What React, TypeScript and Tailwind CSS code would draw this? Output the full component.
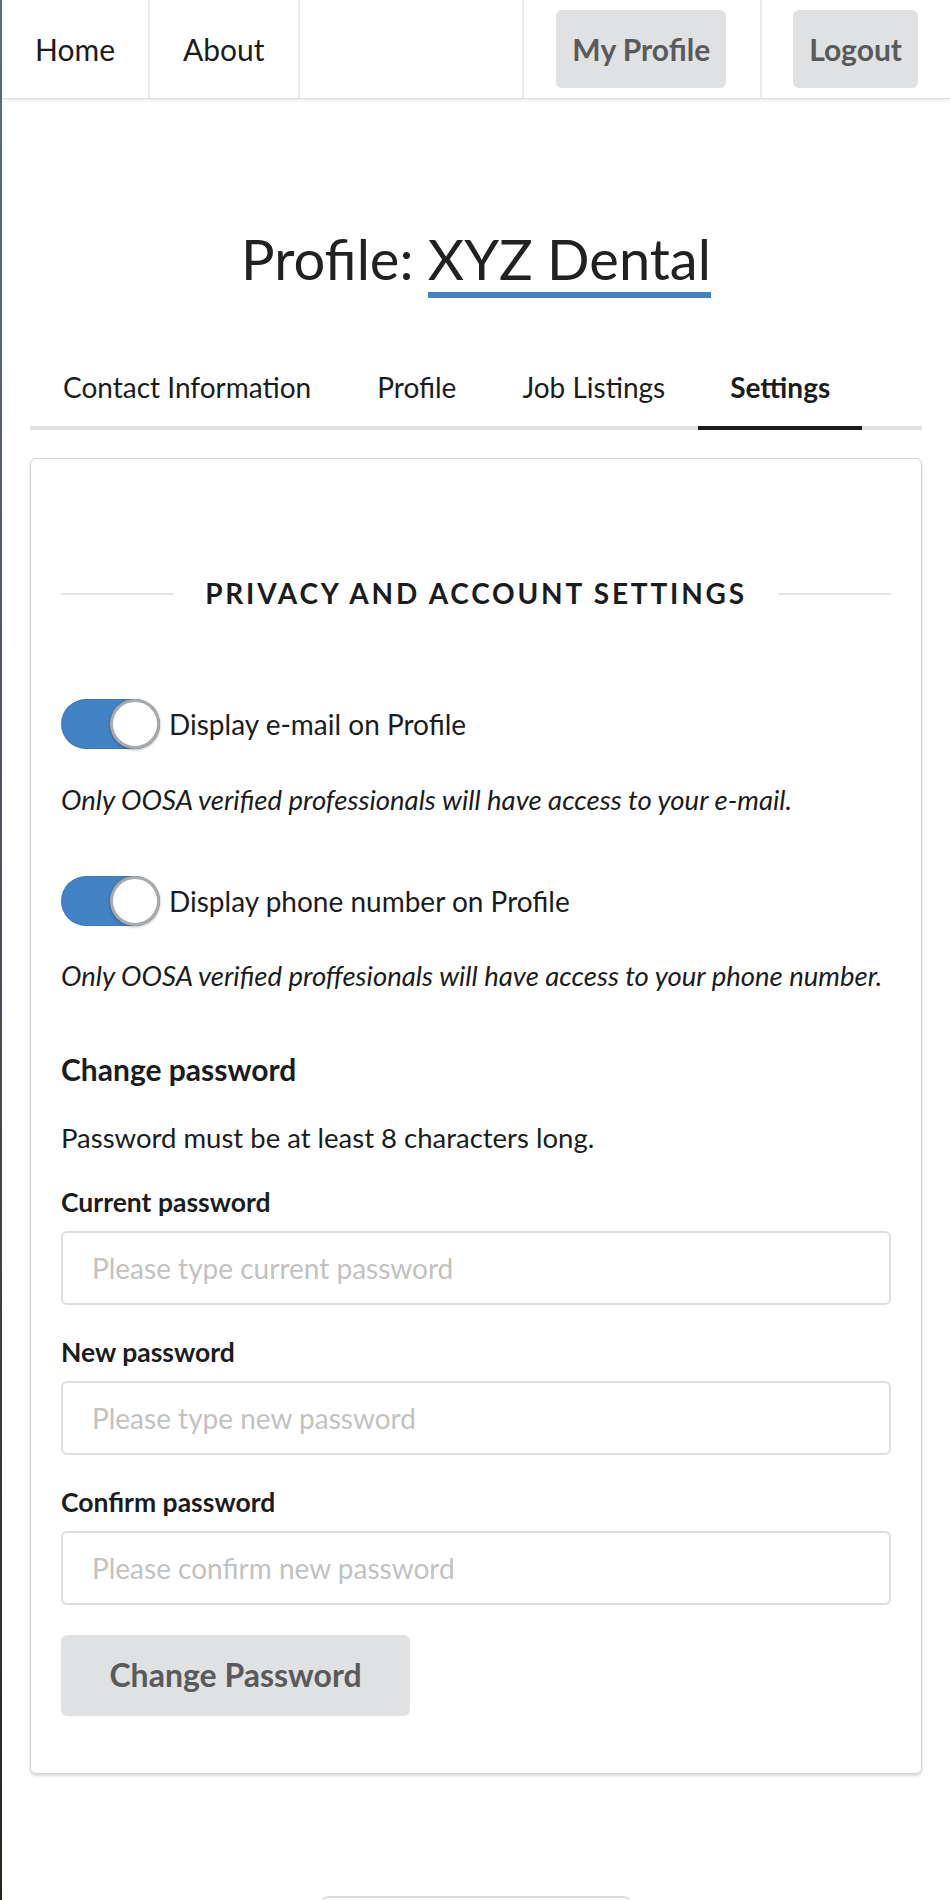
import React from 'react'

const font = { fontFamily: 'Lato, "Open Sans", Arial, sans-serif' }

function Toggle() {
  return (
    <div className="relative h-[50px] w-[99px] shrink-0 rounded-full bg-[#4183c4] shadow-[inset_0_0_0_1px_rgba(0,0,0,0.08)]">
      <div className="absolute right-0 top-0 h-[50px] w-[50px] rounded-full border-[3px] border-[#aaaaaa] bg-white shadow-[0_1px_3px_rgba(0,0,0,0.3)]" />
    </div>
  )
}

function Field({ label, placeholder }: { label: string; placeholder: string }) {
  return (
    <div className="flex flex-col">
      <label className="text-[26.5px] font-bold leading-[1.2] text-[#1b1c1d]">{label}</label>
      <input
        type="password"
        placeholder={placeholder}
        className="mt-[12px] h-[74px] w-full rounded-[6px] border-2 border-[#dedede] bg-white px-[29px] text-[28px] text-[#333] outline-none placeholder:text-[#c2c2c2]"
        style={font}
      />
    </div>
  )
}

export default function App() {
  return (
    <div className="flex min-h-[1900px] bg-white text-[#1b1c1d]" style={font}>
      <div className="w-[2px] shrink-0 bg-gradient-to-b from-[#5d6d85] via-[#4a4f5a] to-[#2a2218]" />
      <div className="flex min-w-0 flex-1 flex-col">
        <nav className="flex h-[99px] border-b border-[#dcdcdc] bg-white shadow-[0_2px_4px_rgba(0,0,0,0.08)]">
          <a className="flex items-center border-r-2 border-[#ebebeb] px-[33px] text-[30px]">Home</a>
          <a className="flex items-center border-r-2 border-[#ebebeb] px-[33px] text-[30px]">About</a>
          <div className="flex-1" />
          <div className="flex items-center border-l-2 border-[#ebebeb] pl-[32px] pr-[34px]">
            <button className="rounded-[6px] bg-[#e0e1e2] px-[16px] py-[21px] text-[30px] font-bold leading-[1.2] text-[#5a5a5a]">
              My Profile
            </button>
          </div>
          <div className="flex items-center border-l-2 border-[#ebebeb] pl-[31px] pr-[32px]">
            <button className="rounded-[6px] bg-[#e0e1e2] px-[16px] py-[21px] text-[30px] font-bold leading-[1.2] text-[#5a5a5a]">
              Logout
            </button>
          </div>
        </nav>

        <div className="mx-[28px] flex flex-col">
          <h1 className="mt-[126px] text-center text-[56px] font-normal leading-[1.2] text-[#212121]">
            Profile:{' '}
            <span className="inline-block border-b-[6px] border-[#4183c4]">XYZ Dental</span>
          </h1>

          <div className="mt-[57px] flex border-b-4 border-[#e0e0e0] text-[28px] leading-[1.2]">
            <div className="-mb-[4px] px-[33px] pb-[21px] pt-4">Contact Information</div>
            <div className="-mb-[4px] px-[33px] pb-[21px] pt-4">Profile</div>
            <div className="-mb-[4px] px-[33px] pb-[21px] pt-4">Job Listings</div>
            <div className="-mb-[4px] border-b-4 border-[#1b1c1d] px-[32px] pb-[21px] pt-4 font-bold">Settings</div>
          </div>

          <div className="mt-[28px] rounded-[6px] border border-[#d4d4d5] bg-white px-[30px] pb-[57px] pt-[118px] shadow-[0_2px_3px_rgba(0,0,0,0.15)]">
            <div className="flex items-center gap-[31px]">
              <div className="h-[2px] flex-1 bg-[#e3e3e3]" />
              <h2 className="text-[28px] font-bold uppercase leading-[1.2] tracking-[0.1em] text-[#1b1c1d]">
                Privacy and Account Settings
              </h2>
              <div className="h-[2px] flex-1 bg-[#e3e3e3]" />
            </div>

            <div className="mt-[89px] flex items-center">
              <Toggle />
              <span className="ml-[9px] text-[28px] leading-[1.2]">Display e-mail on Profile</span>
            </div>
            <p className="mt-[34px] text-[27.5px] italic leading-[1.2]">
              Only OOSA verified professionals will have access to your e-mail.
            </p>

            <div className="mt-[60px] flex items-center">
              <Toggle />
              <span className="ml-[9px] text-[28px] leading-[1.2]">Display phone number on Profile</span>
            </div>
            <p className="mt-[33px] text-[27.5px] italic leading-[1.2]">
              Only OOSA verified proffesionals will have access to your phone number.
            </p>

            <h3 className="mt-[59px] text-[30px] font-bold leading-[1.2]">Change password</h3>
            <p className="mt-[34px] text-[27.5px] leading-[1.2]">Password must be at least 8 characters long.</p>

            <div className="mt-[33px] flex flex-col gap-[32px]">
              <Field label="Current password" placeholder="Please type current password" />
              <Field label="New password" placeholder="Please type new password" />
              <Field label="Confirm password" placeholder="Please confirm new password" />
            </div>

            <button className="mt-[30px] h-[81px] w-[349px] rounded-[6px] bg-[#e0e1e2] text-[32px] font-bold text-[#5a5a5a]">
              Change Password
            </button>
          </div>

          <div className="mx-auto mt-[122px] h-[20px] w-[308px] rounded-t-[6px] border-2 border-b-0 border-[#dcdcdc]" />
        </div>
      </div>
    </div>
  )
}
